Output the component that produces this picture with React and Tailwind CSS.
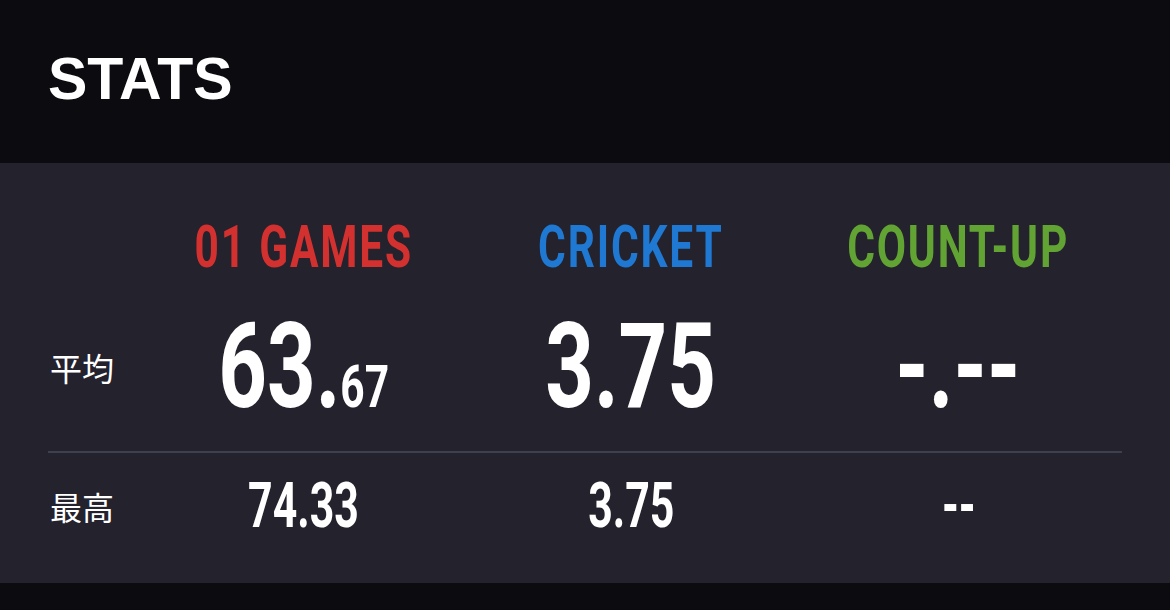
import React from "react";

const stats = [
  { title: "01 GAMES", color: "text-[#d3312f]", avg: "63.", avgSmall: "67", best: "74.33" },
  { title: "CRICKET", color: "text-[#1f78d2]", avg: "3.75", avgSmall: "", best: "3.75" },
  { title: "COUNT-UP", color: "text-[#62a434]", avg: "-.--", avgSmall: "", best: "--" },
];

const num = "font-['Roboto','Liberation_Sans',sans-serif] font-bold";

export default function App() {
  return (
    <div className="w-[1170px] h-[610px] bg-[#0b0b10] text-white">
      {/* Header */}
      <div className="h-[163px] pt-[50px] pl-[48px]">
        <h1 className="font-['Liberation_Sans',sans-serif] font-bold text-[59px] leading-none">
          STATS
        </h1>
      </div>

      {/* Stats panel */}
      <div className="bg-[#23222d] px-[48px] pt-[54px] pb-[46px]">
        <div className="grid grid-cols-[92px_repeat(3,1fr)]">
          <div />
          {stats.map((s) => (
            <div key={s.title} className="text-center">
              <span
                className={`inline-block scale-x-[0.72] ${num} text-[59px] leading-none tracking-[2.5px] ${s.color}`}
              >
                {s.title}
              </span>
            </div>
          ))}
        </div>

        {/* Average */}
        <div className="grid grid-cols-[92px_repeat(3,1fr)] items-center mt-[32px]">
          <div className="font-['Noto_Sans_CJK_JP',sans-serif] font-normal text-[32px] leading-none pl-[2px]">
            平均
          </div>
          {stats.map((s) => (
            <div key={s.title} className="text-center">
              <span className={`inline-block scale-x-[0.72] ${num} leading-none whitespace-nowrap`}>
                <span className="text-[118px]">{s.avg}</span>
                {s.avgSmall && <span className="text-[59px]">{s.avgSmall}</span>}
              </span>
            </div>
          ))}
        </div>

        <div className="h-[2px] bg-[#3d404e] mt-[25px]" />

        {/* Best */}
        <div className="grid grid-cols-[92px_repeat(3,1fr)] items-center mt-[21px]">
          <div className="font-['Noto_Sans_CJK_JP',sans-serif] font-normal text-[32px] leading-none pl-[2px]">
            最高
          </div>
          {stats.map((s) => (
            <div key={s.title} className="text-center">
              <span className={`inline-block scale-x-[0.68] ${num} text-[63px] leading-none`}>
                {s.best}
              </span>
            </div>
          ))}
        </div>
      </div>
    </div>
  );
}
